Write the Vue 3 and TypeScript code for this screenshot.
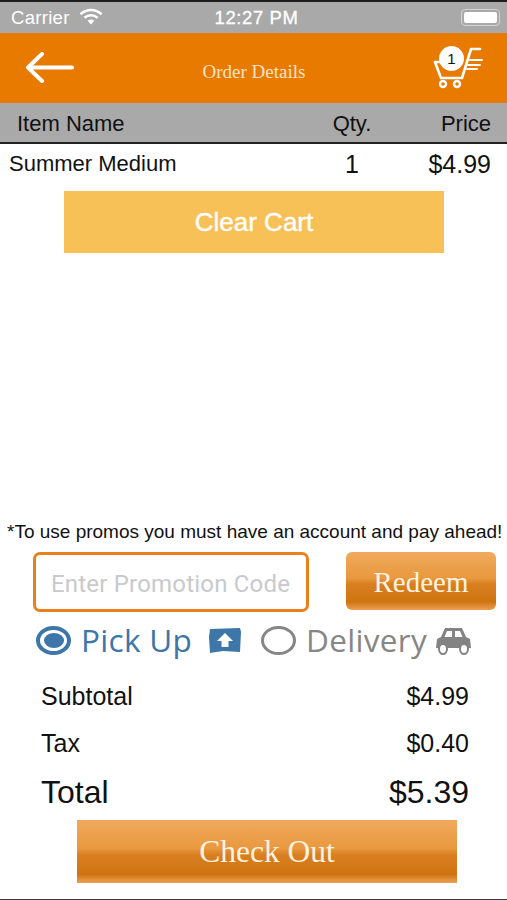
<script setup lang="ts">
interface CartItem {
  name: string;
  qty: number;
  price: string;
}

const items: CartItem[] = [{ name: 'Summer Medium', qty: 1, price: '$4.99' }];
const promo = '';
</script>

<template>
  <div class="screen">
    <div class="status-bar">
      <div class="status-left">
        <span>Carrier</span>
        <svg class="wifi" width="24" height="17" viewBox="0 0 24 17">
          <path d="M1.5 6.2 C7.5 0.6 16.5 0.6 22.5 6.2" fill="none" stroke="#fff" stroke-width="2.6" />
          <path d="M5.4 9.8 C9.3 6.4 14.7 6.4 18.6 9.8" fill="none" stroke="#fff" stroke-width="2.6" />
          <path d="M8.6 12.8 C10.6 11 13.4 11 15.4 12.8 L12 16.4 Z" fill="#fff" />
        </svg>
      </div>
      <span class="clock">12:27 PM</span>
      <div class="battery"><i></i></div>
    </div>

    <header class="nav">
      <svg width="50" height="32" viewBox="0 0 50 32">
        <path d="M47 15.5 H3 M17 2 L3 15.5 L17 29" fill="none" stroke="#fff" stroke-width="4" stroke-linecap="round" stroke-linejoin="round" />
      </svg>
      <span class="nav-title">Order Details</span>
      <div class="cart">
        <svg width="50" height="44" viewBox="0 0 50 44">
          <path d="M47 2 H38 L29 31 H8 L2 15 H12" fill="none" stroke="#fff" stroke-width="2.6" stroke-linejoin="round" stroke-linecap="round" />
          <path d="M37 13 H49 M35 18 H47 M34 22 H44" fill="none" stroke="#fff" stroke-width="2" stroke-linecap="round" />
          <circle cx="10" cy="37" r="3" fill="none" stroke="#fff" stroke-width="2.4" />
          <circle cx="24" cy="37" r="3" fill="none" stroke="#fff" stroke-width="2.4" />
        </svg>
        <span class="cart-count">1</span>
      </div>
    </header>

    <div class="table-head">
      <span class="col-name">Item Name</span>
      <span class="col-qty">Qty.</span>
      <span class="col-price">Price</span>
    </div>

    <div v-for="item in items" :key="item.name" class="item-row">
      <span class="col-name">{{ item.name }}</span>
      <span class="col-qty big">{{ item.qty }}</span>
      <span class="col-price big">{{ item.price }}</span>
    </div>

    <button class="clear-btn">Clear Cart</button>

    <div class="spacer"></div>

    <p class="promo-note">*To use promos you must have an account and pay ahead!</p>

    <div class="promo-row">
      <input class="promo-input" :value="promo" placeholder="Enter Promotion Code" />
      <button class="glossy redeem">Redeem</button>
    </div>

    <div class="method-row">
      <span class="radio on"><i></i></span>
      <span class="method blue">Pick Up</span>
      <svg class="store" width="34" height="27" viewBox="0 0 34 27">
        <path d="M2 2 L32 1 L33 5 L32 25 L15 24 L2 26 L1 10 Z" fill="#3d76a8" />
        <path d="M17 6 L25 14 H20.5 V20 H13.5 V14 H9 Z" fill="#fff" />
      </svg>
      <span class="radio off"></span>
      <span class="method grey">Delivery</span>
      <svg class="car" width="37" height="30" viewBox="0 0 37 30">
        <path d="M10 3 H27 L31 12 L35 14 L36 23 H1 L2 14 L6 12 Z" fill="#838383" />
        <path d="M12 6 H17 V12 H9.5 Z M20 6 H25 L27.5 12 H20 Z" fill="#fff" />
        <ellipse cx="8" cy="24" rx="4" ry="5" fill="#fff" stroke="#838383" stroke-width="2" />
        <ellipse cx="29" cy="24" rx="4" ry="5" fill="#fff" stroke="#838383" stroke-width="2" />
      </svg>
    </div>

    <div class="totals">
      <div class="total-row"><span>Subtotal</span><span>$4.99</span></div>
      <div class="total-row"><span>Tax</span><span>$0.40</span></div>
      <div class="total-row grand"><span>Total</span><span>$5.39</span></div>
    </div>

    <button class="glossy checkout">Check Out</button>
  </div>
</template>

<style scoped>
.screen {
  width: 507px;
  height: 900px;
  box-sizing: border-box;
  display: flex;
  flex-direction: column;
  overflow: hidden;
  background: #fff;
  border-top: 2px solid #1c1c1c;
  border-bottom: 1px solid #3a3a3a;
  font-family: "Liberation Sans", Arial, sans-serif;
  color: #111;
}
.status-bar {
  height: 31px;
  flex: none;
  background: #a9a9a9;
  color: #fff;
  display: grid;
  grid-template-columns: 1fr auto 1fr;
  align-items: center;
  padding: 0 7px 0 11px;
  font-size: 18.5px;
}
.status-left {
  display: flex;
  align-items: center;
  gap: 9px;
  letter-spacing: 0.3px;
}
.wifi {
  margin-top: -2px;
}
.clock {
  letter-spacing: 0.6px;
  -webkit-text-stroke: 0.3px #fff;
  margin-left: 2px;
}
.battery {
  justify-self: end;
  width: 39px;
  height: 17px;
  box-sizing: border-box;
  border: 1px solid #d4d4d4;
  border-radius: 4px;
  padding: 2px;
}
.battery i {
  display: block;
  height: 100%;
  background: #fff;
  border-radius: 2px;
}
.nav {
  height: 70px;
  flex: none;
  background: #e97a00;
  display: flex;
  align-items: center;
  justify-content: space-between;
  padding: 0 24px 0 25px;
}
.nav-title {
  font-family: "Liberation Serif", serif;
  font-size: 19px;
  color: #fbe3c4;
  margin-top: 8px;
}
.cart {
  position: relative;
  width: 50px;
  height: 44px;
  margin-top: 2px;
}
.cart svg {
  display: block;
}
.cart-count {
  position: absolute;
  left: 6px;
  top: -1px;
  width: 25px;
  height: 25px;
  border-radius: 50%;
  background: #fff;
  color: #111;
  font-size: 15px;
  line-height: 25px;
  text-align: center;
}
.table-head {
  height: 41px;
  flex: none;
  box-sizing: border-box;
  background: #a9a9a9;
  border-bottom: 2px solid #222;
  display: flex;
  align-items: center;
  padding: 3px 16px 0 17px;
  font-size: 22px;
}
.item-row {
  height: 40px;
  flex: none;
  display: flex;
  align-items: center;
  padding: 0 16px 0 9px;
  font-size: 22px;
}
.col-name {
  flex: 1;
}
.col-qty {
  width: 50px;
  margin-right: 44px;
  text-align: center;
}
.col-price {
  width: 70px;
  text-align: right;
}
.big {
  font-size: 25px;
}
.clear-btn {
  width: 380px;
  height: 62px;
  flex: none;
  margin: 7px 0 0 64px;
  background: #f8c158;
  border: none;
  color: #fff;
  font-family: "Liberation Sans", Arial, sans-serif;
  font-size: 26px;
  -webkit-text-stroke: 0.4px #fff;
}
.spacer {
  flex: 1;
}
.promo-note {
  margin: 0 0 8px 7px;
  font-size: 19px;
  line-height: 24px;
  white-space: nowrap;
}
.promo-row {
  display: flex;
  align-items: flex-start;
  padding-left: 33px;
  gap: 37px;
}
.promo-input {
  width: 276px;
  height: 60px;
  box-sizing: border-box;
  border: 3px solid #e8801c;
  border-radius: 7px;
  padding: 3px 15px 0;
  font-family: Roboto, "Liberation Sans", sans-serif;
  font-size: 24px;
  letter-spacing: 0.2px;
  outline: none;
}
.promo-input::placeholder {
  color: #c9c9cd;
  opacity: 1;
}
.glossy {
  border: none;
  color: #fdf3e2;
  font-family: "Liberation Serif", serif;
  background: linear-gradient(
    to bottom,
    #f0a95c 0%,
    #e9993f 45%,
    #d97f20 55%,
    #cf7411 86%,
    #ee9f55 100%
  );
}
.redeem {
  width: 150px;
  height: 58px;
  border-radius: 6px;
  font-size: 29px;
  padding: 2px 0 0;
}
.method-row {
  height: 48px;
  flex: none;
  display: flex;
  align-items: center;
  padding-left: 36px;
  margin-top: 4px;
}
.radio {
  width: 35px;
  height: 29px;
  box-sizing: border-box;
  border-radius: 50%;
  display: flex;
  align-items: center;
  justify-content: center;
  flex: none;
}
.radio.on {
  border: 4px solid #3d76a8;
}
.radio.on i {
  width: 20px;
  height: 15px;
  border-radius: 50%;
  background: #3d76a8;
}
.radio.off {
  border: 3.5px solid #868686;
  margin-left: 19px;
}
.method {
  font-family: "Open Sans", "Noto Sans", sans-serif;
  font-size: 31.5px;
  line-height: 40px;
  letter-spacing: 0.3px;
  margin-left: 10px;
}
.method.blue {
  color: #3d76a8;
}
.method.grey {
  color: #868686;
}
.store {
  margin-left: 16px;
}
.car {
  margin-left: 8px;
}
.totals {
  flex: none;
  margin-top: 9px;
  padding: 0 38px 0 41px;
}
.total-row {
  display: flex;
  justify-content: space-between;
  align-items: center;
  height: 47px;
  font-size: 25px;
}
.total-row.grand {
  height: 51px;
  font-size: 32px;
}
.checkout {
  width: 380px;
  height: 63px;
  flex: none;
  margin: 2px 0 16px 77px;
  font-size: 31.5px;
}
</style>
